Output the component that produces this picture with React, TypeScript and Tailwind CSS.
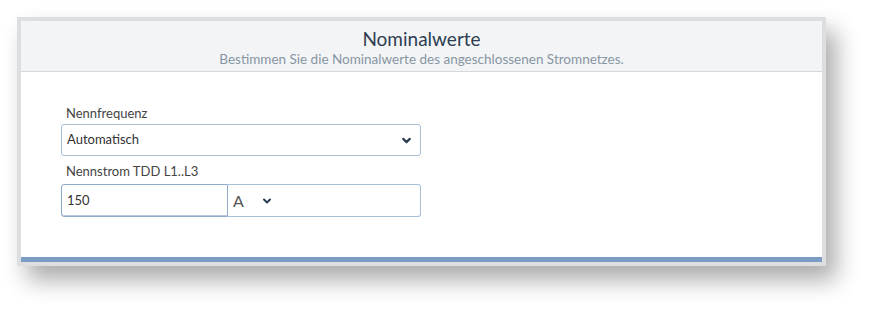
import { ChevronDown } from 'lucide-react'

export default function App() {
  return (
    <div className="w-[874px] h-[316px] bg-white pt-[17px] pl-[17px] font-['Lato','Noto_Sans',sans-serif]">
      {/* Rahmen */}
      <div className="w-[809px] border-4 border-[#dcdee0] shadow-[10px_14px_22px_rgba(0,0,0,0.33)]">
        <div className="bg-white">
          <div className="h-[51px] bg-[#f3f4f6] border-b border-[#d6d9dc] flex flex-col items-center pt-[7px]">
            <h1 className="text-[19px] leading-[22px] text-[#2d3e52]">Nominalwerte</h1>
            <p className="text-[13.5px] leading-[18px] text-[#8796a3]">
              Bestimmen Sie die Nominalwerte des angeschlossenen Stromnetzes.
            </p>
          </div>

          <div className="pl-[40px] pt-[32px] pb-[40px]">
            <label className="block text-[13px] leading-[18px] text-[#444] pl-[5px]">Nennfrequenz</label>
            <div className="mt-[2px] w-[360px] h-[32px] border border-[#a8bfd8] rounded-[3px] flex items-center justify-between px-[5px]">
              <span className="text-[13px] text-[#333]">Automatisch</span>
              <ChevronDown className="w-[13px] h-[13px] text-[#2d3e52] mr-[2px]" strokeWidth={4} />
            </div>

            <label className="block mt-[6px] text-[13px] leading-[18px] text-[#444] pl-[5px]">Nennstrom TDD L1..L3</label>
            <div className="mt-[4px] w-[360px] h-[33px] flex">
              <div className="w-[167px] h-full border border-[#8eabcc] rounded-l-[3px] flex items-center px-[5px] shadow-[inset_0_-1px_0_#b7c8dc]">
                <span className="text-[13px] text-[#333]">150</span>
              </div>
              <div className="flex-1 h-full border border-l-0 border-[#a8bfd8] rounded-r-[3px] flex items-center pl-[5px]">
                <span className="text-[16px] text-[#555]">A</span>
                <ChevronDown className="ml-[17px] w-[12px] h-[12px] text-[#2d3e52]" strokeWidth={4} />
              </div>
            </div>
          </div>

          <div className="h-[5px] bg-[#7b9cc4]" />
        </div>
      </div>
    </div>
  )
}
